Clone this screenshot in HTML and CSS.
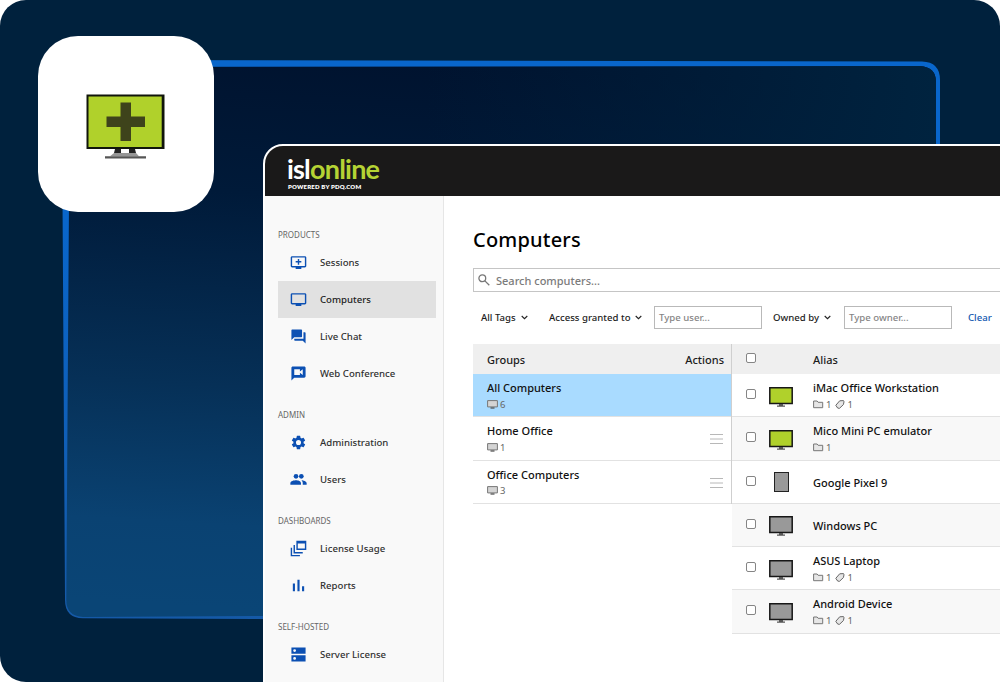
FILE: index.html
```html
<!DOCTYPE html>
<html lang="en">
<head>
    <meta charset="UTF-8">
    <meta name="viewport" content="width=device-width, initial-scale=1.0">
    <title>ISL Online - Computers</title>
    <link rel="stylesheet" href="styles.css">
</head>
<body>

    <!-- Shared icons -->
    <svg class="sprite" aria-hidden="true">
        <symbol id="mini" viewBox="0 0 11 9"><path d="M.6.6h9.8v6.3H.6z" fill="#d4d4d4" stroke="#777"/><path d="M3.5 8h4" stroke="#555" stroke-width="1.3"/></symbol>
        <symbol id="folder" viewBox="0 0 11 9"><path d="M.6 7.7V1h3.5l1 1.3h4.6v5.4z" fill="#e6e6e6" stroke="#777"/></symbol>
        <symbol id="tag" viewBox="0 0 10 9"><path d="M.8 5.3 4.7.8l3.8-.2.5 1.2-.6 2.8-3.9 3.7-1.8-.2z" fill="#e6e6e6" stroke="#666"/></symbol>
        <symbol id="chevron" viewBox="0 0 7 5"><path d="m.7 1 2.8 2.7L6.3 1" fill="none" stroke="#222" stroke-width="1.1"/></symbol>
        <symbol id="monitor" viewBox="0 0 24 20"><path d="M.8.8h22.4v15.8H.8z" fill="currentColor" stroke="#171717" stroke-width="1.5"/><path d="M10 17h4v1.5h2v1.2H8v-1.2h2z" fill="#555"/></symbol>
        <symbol id="menu" viewBox="0 0 13 10"><path d="M0 .5h13M0 5h13M0 9.5h13" stroke="#b8b8b8"/></symbol>
    </svg>

    <div class="hero">
        <svg class="frame" viewBox="0 0 1000 682">
            <defs>
                <linearGradient id="fill" x1=".45" y1="0" x2=".36" y2="1">
                    <stop offset="0" stop-color="#00132f"/>
                    <stop offset=".25" stop-color="#001a39"/>
                    <stop offset=".6" stop-color="#063057"/>
                    <stop offset=".85" stop-color="#0a4272"/>
                    <stop offset="1" stop-color="#0a4576"/>
                </linearGradient>
                <linearGradient id="side">
                    <stop offset=".4" stop-color="#00203c" stop-opacity="0"/>
                    <stop offset="1" stop-color="#00233f"/>
                </linearGradient>
                <linearGradient id="line" x1="0" y1="0" x2="0" y2="1">
                    <stop offset=".3" stop-color="#0966cb"/>
                    <stop offset="1" stop-color="#1559a7"/>
                </linearGradient>
            </defs>
            <path d="M83 60 922 61.500Q940 62 940 80V600Q940 619 922 619H263L83 618.300Q65 618 65 600L62.500 200V80Q64 60 83 60Z" fill="url(#line)"/>
            <path d="M87 67 920 66Q936 67 936 82V598Q936 616 920 616H263L83 617Q66.300 616 66.300 600L69 200V84Q70 67 87 67Z" fill="url(#fill)"/>
            <path d="M87 67 920 66Q936 67 936 82V160H87Z" fill="url(#side)"/>
        </svg>

        <div class="badge">
            <svg width="80" height="66" viewBox="0 0 80 66">
                <path d="M1.500 1.500h76v52.500h-76z" fill="#b0d12b" stroke="#11150b" stroke-width="2"/>
                <path d="M76.700 1v53" stroke="#11150b" stroke-width="2"/>
                <path d="M34.500 8.500h10.500v14h14v10.500H45v14H34.500V33h-14V22.500h14z" fill="#3e431b"/>
                <path d="M29 55h6v4h-7zM43 55h6l1 4h-7z" fill="#222"/>
                <path d="M28 59h22l3 3.300H24z" fill="#969696"/>
                <path d="M19 62.200h41v2.200H19z" fill="#555"/>
            </svg>
        </div>

        <div class="window">
            <header class="topbar">
                <div class="logo">isl<span>online</span></div>
                <div class="tagline">POWERED BY PDQ.COM</div>
            </header>

            <div class="body">
                <nav class="sidebar">
                    <h3>PRODUCTS</h3>
                    <a class="item">
                        <svg viewBox="0 0 24 24"><path d="M21 3H3c-1.100 0-2 .9-2 2v12c0 1.100.9 2 2 2h5v2h8v-2h5c1.100 0 2-.9 2-2V5c0-1.100-.9-2-2-2zm0 14H3V5h18v12zM11 15h2v-3h3v-2h-3V7h-2v3H8v2h3z"/></svg>
                        Sessions
                    </a>
                    <a class="item active">
                        <svg viewBox="0 0 24 24"><path d="M21 3H3c-1.100 0-2 .9-2 2v12c0 1.100.9 2 2 2h5v2h8v-2h5c1.100 0 2-.9 2-2V5c0-1.100-.9-2-2-2zm0 14H3V5h18v12z"/></svg>
                        Computers
                    </a>
                    <a class="item">
                        <svg viewBox="0 0 24 24"><path d="M21 6h-2v9H6v2c0 .55.45 1 1 1h11l4 4V7c0-.55-.45-1-1-1zm-4 6V3c0-.55-.45-1-1-1H3c-.55 0-1 .45-1 1v14l4-4h10c.55 0 1-.45 1-1z"/></svg>
                        Live Chat
                    </a>
                    <a class="item">
                        <svg viewBox="0 0 24 24"><path d="M20 2H4c-1.100 0-2 .9-2 2v18l4-4h14c1.100 0 2-.9 2-2V4c0-1.100-.9-2-2-2zm-2 12-4-3.200V14H6V6h8v3.200L18 6v8z"/></svg>
                        Web Conference
                    </a>

                    <h3>ADMIN</h3>
                    <a class="item">
                        <svg viewBox="0 0 24 24"><path d="M19.140 12.940c.04-.3.060-.61.060-.94s-.02-.64-.07-.94l2.030-1.580a.49.49 0 0 0 .12-.61l-1.920-3.320a.49.49 0 0 0-.59-.22l-2.390.96a7 7 0 0 0-1.620-.94l-.36-2.540a.48.48 0 0 0-.48-.41h-3.840a.47.47 0 0 0-.47.41l-.36 2.540c-.59.24-1.130.57-1.620.94l-2.390-.96a.47.47 0 0 0-.59.22L2.740 8.870a.47.47 0 0 0 .12.610l2.030 1.580a6 6 0 0 0-.02 1.880l-2.030 1.580a.49.49 0 0 0-.12.610l1.920 3.320c.12.220.37.290.59.220l2.390-.96c.5.380 1.030.7 1.620.94l.36 2.540c.05.240.24.410.48.410h3.840c.24 0 .44-.17.47-.41l.36-2.540a7 7 0 0 0 1.620-.94l2.390.96c.22.080.47 0 .59-.22l1.920-3.320a.47.47 0 0 0-.12-.61zM12 15.600a3.600 3.600 0 1 1 0-7.200 3.600 3.600 0 0 1 0 7.200z"/></svg>
                        Administration
                    </a>
                    <a class="item">
                        <svg viewBox="0 0 24 24"><circle cx="8.500" cy="7.500" r="3.300"/><circle cx="16" cy="7.500" r="3.300"/><path d="M8.500 13C5.800 13 .5 14.200 .5 17v2.500h15V17c0-2.800-4.300-4-7-4zM16 13c1.200.9 2 2.300 2 4v2.500h5.500V17c0-2.500-4.500-3.800-7.500-4z"/></svg>
                        Users
                    </a>

                    <h3>DASHBOARDS</h3>
                    <a class="item">
                        <svg viewBox="0 0 24 24"><path d="M1 11h2v10h11v2H1zM5 7h2v10h11v2H5zM9 1h14v13H9zm2 4v7h10V5z" fill-rule="evenodd"/></svg>
                        License Usage
                    </a>
                    <a class="item">
                        <svg viewBox="0 0 24 24"><path d="M4 9h3v11H4zm6.500-5h3v16h-3zM17 13h3v7h-3z"/></svg>
                        Reports
                    </a>

                    <h3>SELF-HOSTED</h3>
                    <a class="item">
                        <svg viewBox="0 0 24 24"><path d="M2 2h20v9H2zm0 11h20v9H2zM6.500 4.500a2 2 0 1 0 0 4 2 2 0 0 0 0-4zm0 11a2 2 0 1 0 0 4 2 2 0 0 0 0-4z" fill-rule="evenodd"/></svg>
                        Server License
                    </a>
                </nav>

                <main class="content">
                    <h1>Computers</h1>
                    <div class="search">
                        <svg width="12" height="12" viewBox="0 0 12 12"><circle cx="4.300" cy="4.300" r="3.400"/><path d="m6.900 6.900 4.400 4.400"/></svg>
                        Search computers...
                    </div>

                    <div class="filters">
                        <span class="drop tags">All Tags <svg><use href="#chevron"/></svg></span>
                        <span class="drop access">Access granted to <svg><use href="#chevron"/></svg></span>
                        <span class="field">Type user...</span>
                        <span class="drop owned">Owned by <svg><use href="#chevron"/></svg></span>
                        <span class="field">Type owner...</span>
                        <a class="clear">Clear</a>
                    </div>

                    <div class="tables">
                        <section class="groups">
                            <div class="head"><span>Groups</span><span>Actions</span></div>
                            <div class="row selected">
                                <div class="info"><div class="name">All Computers</div><div class="meta"><svg><use href="#mini"/></svg>6</div></div>
                            </div>
                            <div class="row">
                                <div class="info"><div class="name">Home Office</div><div class="meta"><svg><use href="#mini"/></svg>1</div></div>
                                <svg class="menu"><use href="#menu"/></svg>
                            </div>
                            <div class="row">
                                <div class="info"><div class="name">Office Computers</div><div class="meta"><svg><use href="#mini"/></svg>3</div></div>
                                <svg class="menu"><use href="#menu"/></svg>
                            </div>
                        </section>

                        <section class="devices">
                            <div class="head"><i class="check"></i><span>Alias</span></div>
                            <div class="row">
                                <i class="check"></i><svg class="device online"><use href="#monitor"/></svg>
                                <div class="info"><div class="name">iMac Office Workstation</div><div class="meta"><svg><use href="#folder"/></svg>1<svg class="tag"><use href="#tag"/></svg>1</div></div>
                            </div>
                            <div class="row">
                                <i class="check"></i><svg class="device online"><use href="#monitor"/></svg>
                                <div class="info"><div class="name">Mico Mini PC emulator</div><div class="meta"><svg><use href="#folder"/></svg>1</div></div>
                            </div>
                            <div class="row">
                                <i class="check"></i><i class="device phone"></i>
                                <div class="info"><div class="name">Google Pixel 9</div></div>
                            </div>
                            <div class="row">
                                <i class="check"></i><svg class="device"><use href="#monitor"/></svg>
                                <div class="info"><div class="name">Windows PC</div></div>
                            </div>
                            <div class="row">
                                <i class="check"></i><svg class="device"><use href="#monitor"/></svg>
                                <div class="info"><div class="name">ASUS Laptop</div><div class="meta"><svg><use href="#folder"/></svg>1<svg class="tag"><use href="#tag"/></svg>1</div></div>
                            </div>
                            <div class="row">
                                <i class="check"></i><svg class="device"><use href="#monitor"/></svg>
                                <div class="info"><div class="name">Android Device</div><div class="meta"><svg><use href="#folder"/></svg>1<svg class="tag"><use href="#tag"/></svg>1</div></div>
                            </div>
                        </section>
                    </div>
                </main>
            </div>
        </div>
    </div>

</body>
</html>
```
FILE: styles.css
```css
/* General styling */
* {
    box-sizing: border-box;
}

body {
    margin: 0;
    background: #fff;
    font-family: "Noto Sans", "Open Sans", sans-serif;
    font-weight: 500;
    color: #1c1c1c;
}

svg {
    display: block;
    flex: none;
}

.sprite {
    display: none;
}

.hero {
    position: relative;
    width: 1000px;
    height: 682px;
    padding: 144px 0 0 263px;
    background: #00213d;
    border-radius: 26px 26px 0 26px;
    overflow: hidden;
}

/* Decorative frame and product badge */
.frame {
    position: absolute;
    top: 0;
    left: 0;
    width: 1000px;
    height: 682px;
}

.badge {
    position: absolute;
    top: 36px;
    left: 38px;
    width: 176px;
    height: 176px;
    padding: 58px 0 0 47.500px;
    background: #fff;
    border-radius: 40px;
}

/* App window */
.window {
    position: relative;
    width: 760px;
    height: 560px;
    border: 2px solid #fff;
    border-radius: 20px 0 0 0;
    background: #fff;
    overflow: hidden;
}

.topbar {
    height: 50px;
    padding: 9px 0 0 22px;
    background: #1a1919;
    color: #fff;
}

.logo {
    height: 28px;
    font: 700 27px/28px Lato, sans-serif;
    letter-spacing: -0.8px;
}

.logo span {
    color: #b5d334;
}

.tagline {
    padding-left: 1px;
    font: 800 6px/7px Lato, sans-serif;
    letter-spacing: 0.2px;
    white-space: nowrap;
}

.body {
    display: flex;
    height: 510px;
}

/* Sidebar */
.sidebar {
    flex: none;
    width: 179px;
    padding: 16px 7px 0 13px;
    background: #f9f9f9;
    border-right: 1px solid #e6e6e6;
}

.sidebar h3 {
    height: 31.700px;
    margin: 0;
    padding-top: 16px;
    font-size: 8px;
    line-height: 13px;
    font-weight: 400;
    color: #666;
}

.item {
    display: flex;
    align-items: center;
    height: 37.100px;
    padding-left: 12px;
    font-size: 9.600px;
    color: #303030;
}

.item svg {
    width: 17px;
    height: 17px;
    margin-right: 13px;
    fill: #0c50b3;
}

.item.active {
    background: #e1e1e1;
    color: #222;
}

/* Main content */
.content {
    flex: none;
    width: 580px;
    padding: 30px 0 0 29px;
}

h1 {
    margin: 0 0 15px;
    font-size: 20px;
    line-height: 27px;
    font-weight: 500;
    letter-spacing: 0.2px;
    color: #000;
}

.search {
    display: flex;
    align-items: center;
    gap: 6px;
    height: 24px;
    padding-left: 4px;
    border: 1.500px solid #c5c5c5;
    font-size: 11px;
    color: #7b7b7b;
}

.search svg {
    fill: none;
    stroke: #777;
    stroke-width: 1.300;
}

.filters {
    display: flex;
    align-items: center;
    height: 24px;
    margin: 13px 0 15px;
    font-size: 9.600px;
    white-space: nowrap;
}

.drop {
    display: flex;
    align-items: center;
    justify-content: space-between;
    flex: none;
}

.drop svg {
    width: 7px;
    height: 5px;
    margin-top: 1px;
}

.tags {
    width: 47px;
    margin: 0 21px 0 8px;
}

.access {
    width: 93px;
    margin-right: 12px;
}

.owned {
    width: 58px;
    margin: 0 13px 0 11px;
}

.field {
    flex: none;
    width: 108px;
    height: 23px;
    padding-left: 4px;
    border: 1px solid #b9b9b9;
    line-height: 21px;
    color: #858585;
}

.clear {
    margin-left: 16px;
    color: #1358b0;
}

/* Tables */
.tables {
    display: flex;
    align-items: flex-start;
    font-size: 11px;
}

.groups {
    flex: none;
    width: 259px;
    border-right: 1px solid #cfcfcf;
}

.devices {
    flex: 1;
}

.head {
    display: flex;
    align-items: center;
    height: 30px;
    background: #efefef;
}

.groups .head {
    justify-content: space-between;
    padding: 0 7px 0 14px;
}

.row {
    display: flex;
    align-items: center;
    height: 43.250px;
    border-bottom: 1px solid #e2e2e2;
}

.groups .row {
    justify-content: space-between;
    padding: 0 8px 0 14px;
}

.groups .row.selected {
    background: #a9dbff;
}

.devices .row:nth-child(odd) {
    background: #f8f8f8;
}

.info {
    padding-top: 2px;
}

.name {
    line-height: 16px;
    color: #111;
}

.meta {
    display: flex;
    align-items: center;
    gap: 2px;
    height: 16px;
    font-size: 9.500px;
    font-weight: 400;
    color: #666;
}

.meta svg {
    width: 11px;
    height: 9px;
}

.meta .tag {
    width: 10px;
    margin-left: 2px;
}

.menu {
    width: 13px;
    height: 10px;
    margin-top: 2px;
}

.devices .head,
.devices .row {
    padding-left: 14px;
}

.check {
    flex: none;
    width: 10px;
    height: 10px;
    margin-top: -2px;
    border: 1px solid #858585;
    border-radius: 2px;
    background: #fff;
}

.head .check {
    margin-right: 57px;
}

.device {
    width: 24px;
    height: 20px;
    margin: 3px 20px 0 13px;
    color: #999;
}

.device.online {
    color: #b0d12b;
}

.phone {
    width: 15px;
    height: 20px;
    margin: 1px 24px 0 18px;
    border: 1.500px solid #222;
    background: #999;
}
```
